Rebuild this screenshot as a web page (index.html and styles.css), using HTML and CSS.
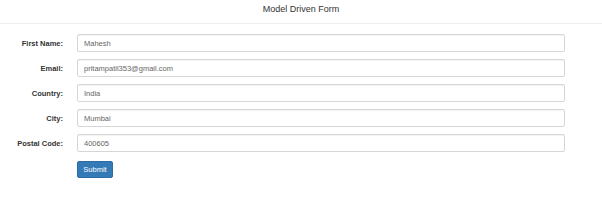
FILE: index.html
```html
<!DOCTYPE html>
<html>
<head>
<meta charset="utf-8">
<link rel="stylesheet" href="styles.css">
</head>
<body>
<div class="page">
  <h3 class="title">Model Driven Form</h3>
  <hr class="divider">
  <form class="form">
    <div class="row">
      <label class="label">First Name:</label>
      <div class="field"><input class="input" type="text" value="Mahesh"></div>
    </div>
    <div class="row">
      <label class="label">Email:</label>
      <div class="field"><input class="input" type="text" value="pritampatil353@gmail.com"></div>
    </div>
    <div class="row">
      <label class="label">Country:</label>
      <div class="field"><input class="input" type="text" value="India"></div>
    </div>
    <div class="row">
      <label class="label">City:</label>
      <div class="field"><input class="input" type="text" value="Mumbai"></div>
    </div>
    <div class="row">
      <label class="label">Postal Code:</label>
      <div class="field"><input class="input" type="text" value="400605"></div>
    </div>
    <div class="row actions">
      <div></div>
      <div class="field"><button class="btn" type="button">Submit</button></div>
    </div>
  </form>
</div>
</body>
</html>
```
FILE: styles.css
```css
html, body {
  margin: 0;
  padding: 0;
  background: #fff;
}
.page {
  width: 602px;
  height: 212px;
  font-family: "Liberation Sans", Arial, sans-serif;
  color: #333;
}
.title {
  margin: 0;
  padding-top: 3px;
  height: 20px;
  box-sizing: border-box;
  font-size: 9px;
  line-height: 12px;
  font-weight: normal;
  text-align: center;
  color: #333;
}
.divider {
  margin: 3px 0 0 0;
  border: 0;
  border-top: 1px solid #eee;
  height: 0;
}
.form {
  margin-top: 10px;
  padding-right: 37px;
}
.row {
  display: grid;
  grid-template-columns: 70px 1fr;
  margin-bottom: 7px;
  align-items: center;
}
.label {
  text-align: right;
  padding-right: 7px;
  font-size: 7.5px;
  font-weight: bold;
  color: #333;
}
.field {
  padding-left: 7px;
}
.input {
  display: block;
  width: 100%;
  height: 18px;
  box-sizing: border-box;
  margin: 0;
  padding: 0 6px;
  border: 1px solid #d6d6d6;
  border-radius: 2px;
  box-shadow: inset 0 1px 1px rgba(0,0,0,0.05);
  font-family: "Liberation Sans", Arial, sans-serif;
  font-size: 7.5px;
  color: #666;
  background: #fff;
  outline: none;
}
.actions {
  margin-top: 9px;
}
.btn {
  display: block;
  width: 36px;
  height: 17px;
  padding: 0;
  margin: 0;
  border: 1px solid #2e6da4;
  border-radius: 2px;
  background: #337ab7;
  color: #fff;
  font-family: "Liberation Sans", Arial, sans-serif;
  font-size: 7.5px;
}
```
